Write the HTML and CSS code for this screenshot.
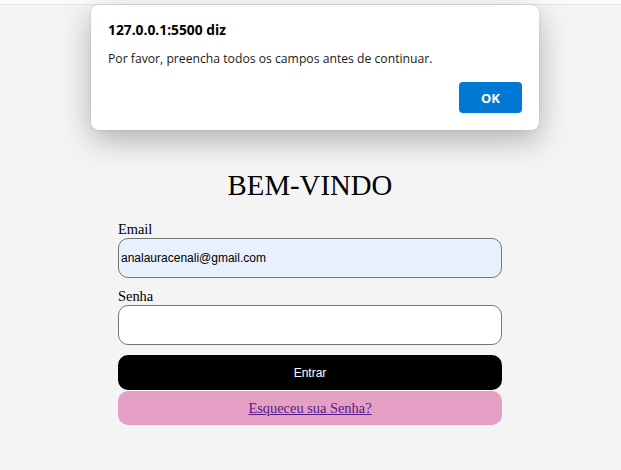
FILE: index.html
```html
<!DOCTYPE html>
<html lang="pt-BR">
<head>
<meta charset="utf-8">
<title>Login</title>
<link rel="stylesheet" href="styles.css">
</head>
<body>
<div class="topbar"></div>
<main class="page">
  <h1 class="title">BEM-VINDO</h1>
  <form class="form">
    <label class="label" for="email">Email</label>
    <input class="field field-filled" id="email" type="text" value="analauracenali@gmail.com">
    <label class="label label-senha" for="senha">Senha</label>
    <input class="field" id="senha" type="password">
    <button class="btn-enter" type="button">Entrar</button>
    <div class="btn-forgot"><a href="#" class="forgot-link">Esqueceu sua Senha?</a></div>
  </form>
</main>
<div class="dialog">
  <div class="dialog-title">127.0.0.1:5500 diz</div>
  <div class="dialog-msg">Por favor, preencha todos os campos antes de continuar.</div>
  <div class="dialog-actions"><button class="dialog-ok" type="button">OK</button></div>
</div>
</body>
</html>
```
FILE: styles.css
```css
html, body {
  margin: 0;
  padding: 0;
  background: #f4f4f4;
  height: 100%;
  overflow: hidden;
}
body {
  font-family: "Liberation Serif", "Times New Roman", serif;
  font-size: 14.4px;
  color: #000;
}
.topbar {
  height: 4px;
  background: #fbfbfb;
  border-bottom: 1px solid #e4e4e4;
}
.page {
  padding-top: 164px;
  padding-right: 1px;
}
.title {
  margin: 0;
  text-align: center;
  font-weight: normal;
  font-size: 28.8px;
  line-height: 33px;
}
.form {
  width: 384px;
  margin: 19px auto 0;
  display: flex;
  flex-direction: column;
}
.label {
  line-height: 17px;
  font-size: 14.4px;
}
.label-senha {
  margin-top: 10px;
}
.field {
  box-sizing: border-box;
  height: 40px;
  margin: 0;
  border: 1px solid #767676;
  border-radius: 10px;
  background: #fff;
  padding: 0 2px;
  font-family: "Liberation Sans", Arial, sans-serif;
  font-size: 12px;
  color: #000;
  outline: none;
}
.field-filled {
  background: #e8f0fe;
}
.btn-enter {
  margin-top: 10px;
  height: 35px;
  border: none;
  border-radius: 10px;
  background: #000;
  color: #fff;
  font-family: "Liberation Sans", Arial, sans-serif;
  font-size: 12px;
}
.btn-forgot {
  margin-top: 1px;
  height: 34px;
  border-radius: 10px;
  background: #e59fc4;
  display: flex;
  align-items: center;
  justify-content: center;
}
.forgot-link {
  color: #551a8b;
  font-size: 14.4px;
}
.dialog {
  position: absolute;
  left: 91px;
  top: 5px;
  width: 448px;
  height: 125px;
  box-sizing: border-box;
  background: #fff;
  border-radius: 8px;
  box-shadow: 0 10px 30px rgba(0,0,0,0.28), 0 0 2px rgba(0,0,0,0.15);
  padding: 16px 17px 0 17px;
  font-family: "Open Sans", "Noto Sans", sans-serif;
  color: #000;
}
.dialog-title {
  font-weight: bold;
  font-size: 13.8px;
  line-height: 18px;
}
.dialog-msg {
  margin-top: 11px;
  font-size: 12.2px;
  line-height: 18px;
  color: #1a1a1a;
}
.dialog-actions {
  display: flex;
  justify-content: flex-end;
  margin-top: 14px;
}
.dialog-ok {
  width: 63px;
  height: 31px;
  border: none;
  border-radius: 4px;
  background: #0078d4;
  color: #fff;
  font-family: "Open Sans", "Noto Sans", sans-serif;
  font-weight: bold;
  font-size: 13px;
}
```
